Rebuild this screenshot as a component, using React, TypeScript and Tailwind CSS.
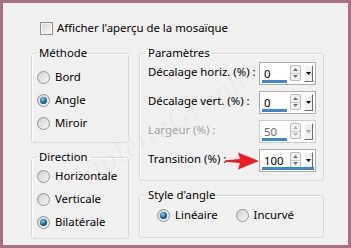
import React from "react";

const Radio = ({ checked }: { checked?: boolean }) => (
  <span className="flex h-[13px] w-[13px] shrink-0 items-center justify-center rounded-full border border-[#8e9396] bg-[linear-gradient(135deg,#cfd1d3,#f6f6f6)]">
    {checked && (
      <span className="h-[7px] w-[7px] rounded-full bg-[radial-gradient(circle_at_40%_35%,#7fcfee,#17608f_55%,#0b3656)]" />
    )}
  </span>
);

const RadioRow = ({ label, checked }: { label: string; checked?: boolean }) => (
  <div className="flex h-[16px] items-center gap-[5px] whitespace-nowrap">
    <Radio checked={checked} />
    <span>{label}</span>
  </div>
);

const Group = ({ title, className, children }: { title: string; className: string; children: React.ReactNode }) => (
  <fieldset className={`rounded-[3px] border border-[#d5dade] shadow-[inset_1px_1px_0_#ffffff] ${className}`}>
    <legend className="px-[2px] leading-[16px]">{title}</legend>
    {children}
  </fieldset>
);

const Spin = ({ value, full, disabled }: { value: string; full?: boolean; disabled?: boolean }) => (
  <div className={`relative flex h-[23px] w-[57px] shrink-0 items-start border ${disabled ? "border-[#c9cbce] bg-[#fcfcfc] text-[#6d6d6d]" : "border-[#abadb3] bg-white"}`}>
    <span className="flex-1 pl-[4px] pt-[3px]">{value}</span>
    <div className="mt-[2px] flex h-[16px] w-[11px] flex-col rounded-[2px] border border-[#b9bcbf] bg-[#f2f2f2]">
      <div className="flex flex-1 items-center justify-center border-b border-[#c9cbce]">
        <svg width="5" height="3" viewBox="0 0 5 3"><path d="M0 3L2.5 0L5 3Z" fill={disabled ? "#b0b0b0" : "#6f7478"} /></svg>
      </div>
      <div className="flex flex-1 items-center justify-center">
        <svg width="5" height="3" viewBox="0 0 5 3"><path d="M0 0L2.5 3L5 0Z" fill={disabled ? "#b0b0b0" : "#6f7478"} /></svg>
      </div>
    </div>
    <div className="ml-[3px] mr-[2px] mt-[2px] flex h-[17px] w-[9px] items-center justify-center border-b border-l border-r border-t border-b-[#6b6b6b] border-l-white border-r-[#6b6b6b] border-t-white bg-[#f0f0f0]">
      <svg width="5" height="3" viewBox="0 0 5 3"><path d="M0 0L2.5 3L5 0Z" fill={disabled ? "#a0a0a0" : "#000000"} /></svg>
    </div>
    <div className={`absolute bottom-[1px] left-[2px] h-[3px] bg-[#3a87d4] ${full ? "right-[1px]" : "w-[25px]"}`} />
  </div>
);

const ParamRow = ({ label, value, full, disabled }: { label: string; value: string; full?: boolean; disabled?: boolean }) => (
  <div className="flex h-[23px] items-center justify-between">
    <span className={`-mt-[3px] ml-[2px] whitespace-nowrap ${disabled ? "text-[#a3a3a3]" : ""}`}>{label}</span>
    <Spin value={value} full={full} disabled={disabled} />
  </div>
);

export default function App() {
  return (
    <div className="relative h-[248px] w-[351px] overflow-hidden border-[3px] border-[#a9717f] bg-[#f0f0f0] font-['Noto_Sans',sans-serif] text-[11.4px] leading-[16px] text-black">
      <div className="pl-[28px] pt-[17px]">
        <div className="ml-[9px] flex h-[16px] items-center gap-[4px]">
          <span className="h-[13px] w-[13px] border border-[#8f8f8f] bg-[linear-gradient(135deg,#d6d6d6,#f8f8f8)] shadow-[inset_0_0_0_1px_#f4f4f4]" />
          <span>Afficher l'aperçu de la mosaïque</span>
        </div>
        <div className="mt-[9px] flex gap-[10px]">
          <div className="flex w-[98px] flex-col gap-[6px]">
            <Group title="Méthode" className="pb-[11px] pl-[5px] pt-[8px]">
              <div className="flex flex-col gap-[7px]">
                <RadioRow label="Bord" />
                <RadioRow label="Angle" checked />
                <RadioRow label="Miroir" />
              </div>
            </Group>
            <Group title="Direction" className="pb-[8px] pl-[5px] pt-[3px]">
              <div className="flex flex-col gap-[7px]">
                <RadioRow label="Horizontale" />
                <RadioRow label="Verticale" />
                <RadioRow label="Bilatérale" checked />
              </div>
            </Group>
          </div>
          <div className="flex w-[185px] flex-col gap-[6px]">
            <Group title="Paramètres" className="pb-[8px] pl-[6px] pr-[7px] pt-[1px]">
              <div className="flex flex-col gap-[6px]">
                <ParamRow label="Décalage horiz. (%) :" value="0" />
                <ParamRow label="Décalage vert. (%) :" value="0" />
                <ParamRow label="Largeur (%) :" value="50" disabled />
                <ParamRow label="Transition (%) :" value="100" full />
              </div>
            </Group>
            <Group title="Style d'angle" className="pb-[14px] pl-[6px] pt-[4px]">
              <div className="ml-[11px] flex items-center gap-[18px]">
                <RadioRow label="Linéaire" checked />
                <RadioRow label="Incurvé" />
              </div>
            </Group>
          </div>
        </div>
      </div>
      <span className="pointer-events-none absolute left-[60px] top-[110px] -rotate-[31deg] font-['Liberation_Serif',serif] text-[30px] italic leading-none tracking-[2px] text-[#000000]/[0.035]">
        VioletteGraph
      </span>
      <svg className="absolute left-[222px] top-[149px]" width="34" height="18" viewBox="0 0 34 18">
        <path d="M0 8.2L15 7L13 0.5L34 9L13 17.5L15 11L0 9.8Z" fill="#ec1c24" />
      </svg>
    </div>
  );
}
